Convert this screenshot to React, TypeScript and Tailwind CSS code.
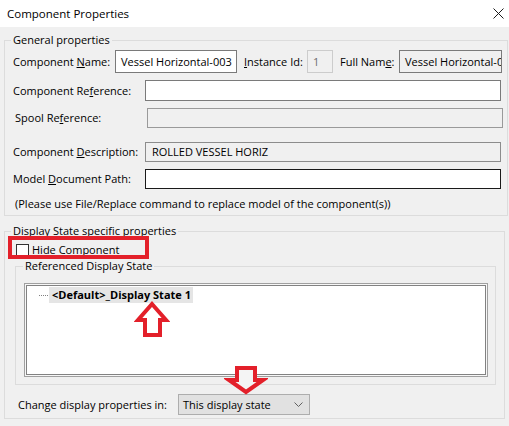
export default function App() {
  return (
    <div className="relative w-[509px] h-[426px] overflow-hidden bg-[#f0f0f0] font-['Open_Sans',sans-serif] text-[11px] leading-[16px] text-black">
      {/* title bar */}
      <div className="h-[27px] bg-white flex items-center justify-between pl-[7px] pr-[5px]">
        <span className="text-[11.5px]">Component Properties</span>
        <svg width="11" height="11" viewBox="0 0 11 11">
          <path d="M0.5 0.5 L10.5 10.5 M10.5 0.5 L0.5 10.5" stroke="#1a1a1a" strokeWidth="1" fill="none" />
        </svg>
      </div>

      <div className="px-[4px] pt-[5px]">
        {/* General properties */}
        <fieldset className="border border-[#dcdcdc] pl-[8px] pr-[4px] pb-[3px]">
          <legend className="-ml-[2px] px-[2px] leading-[16px]">General properties</legend>

          <div className="flex items-center h-[23px] mt-[2px]">
            <span className="w-[102px] shrink-0">
              Component <u>N</u>ame:
            </span>
            <div className="w-[122px] h-[23px] shrink-0 border border-[#7a7a7a] bg-white pl-[5px] flex items-center whitespace-nowrap">
              Vessel Horizontal-003
            </div>
            <span className="w-[70px] shrink-0 pl-[7px]">
              <u>I</u>nstance Id:
            </span>
            <div className="w-[26px] h-[23px] shrink-0 border border-[#cccccc] bg-[#f0f0f0] text-[#6d6d6d] pl-[5px] flex items-center">
              1
            </div>
            <span className="w-[66px] shrink-0 pl-[7px]">
              Full Nam<u>e</u>:
            </span>
            <div className="w-[103px] h-[23px] shrink-0 border border-[#7a7a7a] bg-[#f0f0f0] pl-[5px] flex items-center whitespace-nowrap overflow-hidden">
              Vessel Horizontal-003
            </div>
          </div>

          <div className="flex items-center h-[21px] mt-[7px]">
            <span className="w-[132px] shrink-0">
              Component Re<u>f</u>erence:
            </span>
            <div className="w-[356px] h-[21px] border border-[#7a7a7a] bg-white" />
          </div>

          <div className="flex items-center h-[20px] mt-[7px]">
            <span className="w-[134px] shrink-0 pl-[2px]">
              Spool Re<u>f</u>erence:
            </span>
            <div className="w-[356px] h-[20px] border border-[#9a9a9a] bg-[#f0f0f0]" />
          </div>

          <div className="flex items-center h-[20px] mt-[14px]">
            <span className="w-[132px] shrink-0">
              Component <u>D</u>escription:
            </span>
            <div className="w-[356px] h-[20px] border border-[#8c8c8c] bg-[#f0f0f0] pl-[6px] flex items-center">
              ROLLED VESSEL HORIZ
            </div>
          </div>

          <div className="flex items-center h-[20px] mt-[7px]">
            <span className="w-[132px] shrink-0">
              Model <u>D</u>ocument Path:
            </span>
            <div className="w-[356px] h-[20px] border border-[#1a1a1a] bg-white" />
          </div>

          <div className="h-[16px] mt-[7px] pl-[2px]">
            (Please use File/Replace command to replace model of the component(s))
          </div>
        </fieldset>

        {/* Display state specific */}
        <fieldset className="mt-[7px] border border-[#dcdcdc] pl-[10px] pr-[8px] pb-[3px]">
          <legend className="-ml-[4px] px-[2px] leading-[16px]">Display State specific properties</legend>

          <div className="flex items-center h-[16px] mt-[3px] ml-[1px]">
            <span className="w-[13px] h-[13px] border border-[#333333] bg-white shrink-0" />
            <span className="pl-[3px]">
              Hide Co<u>m</u>ponent
            </span>
          </div>

          <fieldset className="border border-[#dcdcdc] pl-[8px] pr-[7px] pb-[7px]">
            <legend className="-ml-[1px] px-[2px] leading-[16px]">Referenced Display State</legend>
            <div className="mt-[9px] h-[94px] border border-[#a0a0a0] bg-[#f7f7f7] p-px">
              <div className="h-full border border-[#828282] bg-white pt-[1px]">
                <div className="flex items-center h-[16px]">
                  <span className="ml-[12px] w-[9px] border-t border-dotted border-[#808080]" />
                  <span className="ml-[1px] pl-[3px] pr-[2px] bg-[#e5e5e5] font-bold whitespace-nowrap">
                    &lt;Default&gt;_Display State 1
                  </span>
                </div>
              </div>
            </div>
          </fieldset>

          <div className="flex items-center h-[21px] mt-[9px]">
            <span className="w-[163px] shrink-0 pl-[3px]">Change display properties in:</span>
            <div className="w-[132px] h-[21px] border border-[#adadad] bg-[#e1e1e1] pl-[4px] pr-[6px] flex items-center justify-between">
              <span>This display state</span>
              <svg width="9" height="5" viewBox="0 0 9 5">
                <path d="M0.5 0.5 L4.5 4.5 L8.5 0.5" stroke="#606060" strokeWidth="1" fill="none" />
              </svg>
            </div>
          </div>
        </fieldset>
      </div>

      {/* annotations */}
      <div className="absolute left-[8px] top-[236px] w-[141px] h-[23px] border-4 border-[#e3202a]" />
      <svg className="absolute left-[134px] top-[300px]" width="36" height="39" viewBox="0 0 36 39">
        <path
          d="M18 4 L32 20 L26 20 L26 35 L11 35 L11 20 L4 20 Z"
          fill="white"
          stroke="#e3202a"
          strokeWidth="4"
          strokeLinejoin="miter"
        />
      </svg>
      <svg className="absolute left-[224px] top-[363px]" width="44" height="33" viewBox="0 0 44 33">
        <path
          d="M13 5 L31 5 L31 17 L39 17 L22 29 L5 17 L13 17 Z"
          fill="#f4f4f4"
          stroke="#e3202a"
          strokeWidth="4"
          strokeLinejoin="miter"
        />
      </svg>
    </div>
  );
}
